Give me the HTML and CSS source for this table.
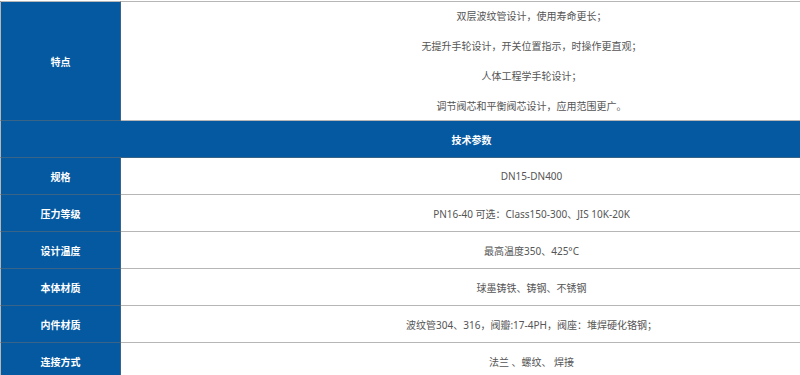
FILE: index.html
```html
<!DOCTYPE html>
<html lang="zh-CN">
<head>
<meta charset="utf-8">
<title>技术参数</title>
<link rel="stylesheet" href="styles.css">
</head>
<body>
<table class="spec">
  <colgroup><col class="c-label"><col class="c-value"></colgroup>
  <tbody>
    <tr class="feature">
      <th class="label">特点</th>
      <td class="value">
        <p>双层波纹管设计，使用寿命更长；</p>
        <p>无提升手轮设计，开关位置指示，时操作更直观；</p>
        <p>人体工程学手轮设计；</p>
        <p>调节阀芯和平衡阀芯设计，应用范围更广。</p>
      </td>
    </tr>
    <tr class="row">
      <th class="head" colspan="2">技术参数</th>
    </tr>
    <tr class="row">
      <th class="label">规格</th>
      <td class="value">DN15-DN400</td>
    </tr>
    <tr class="row">
      <th class="label">压力等级</th>
      <td class="value">PN16-40 可选：Class150-300、JIS 10K-20K</td>
    </tr>
    <tr class="row">
      <th class="label">设计温度</th>
      <td class="value">最高温度350、425°C</td>
    </tr>
    <tr class="row">
      <th class="label">本体材质</th>
      <td class="value">球墨铸铁、铸钢、不锈钢</td>
    </tr>
    <tr class="row">
      <th class="label">内件材质</th>
      <td class="value">波纹管304、316，阀瓣:17-4PH，阀座：堆焊硬化铬钢；</td>
    </tr>
    <tr class="row">
      <th class="label">连接方式</th>
      <td class="value">法兰 、螺纹、 焊接</td>
    </tr>
  </tbody>
</table>
</body>
</html>
```

FILE: styles.css
```css
html, body {
  margin: 0;
  padding: 0;
  background: #ffffff;
  overflow: hidden;
}
body {
  padding-top: 1px;
  font-family: "Noto Sans", "Noto Sans CJK SC", sans-serif;
  font-size: 10px;
  color: #555555;
}
.spec {
  width: 943px;
  border-collapse: collapse;
  table-layout: fixed;
}
.c-label { width: 120px; }
.spec th,
.spec td {
  border: 1px solid rgba(110, 110, 110, 0.5);
  padding: 0;
  text-align: center;
  vertical-align: middle;
}
.label,
.head {
  background: #0459a1;
  color: #ffffff;
  font-weight: bold;
}
.row th,
.row td {
  height: 36px;
}
.feature th,
.feature td {
  height: 118px;
}
.value p {
  margin: 10px 0;
  line-height: 20px;
}
.value p:first-child { margin-top: 0; }
.value p:last-child { margin-bottom: 0; }
```
